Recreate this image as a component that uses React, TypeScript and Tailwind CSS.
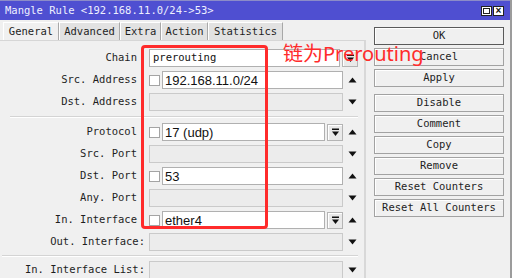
import React from 'react';

const MONO = { fontFamily: '"DejaVu Sans Mono", "Liberation Mono", monospace' };
const SANS = { fontFamily: '"Liberation Sans", Arial, sans-serif' };

type Row = {
  label: string;
  colon?: boolean;
  value?: string;
  check?: boolean;
  drop?: boolean;
  arrow: 'up' | 'down';
};

const rowsA: Row[] = [
  { label: 'Src. Address', check: true, value: '192.168.11.0/24', arrow: 'up' },
  { label: 'Dst. Address', arrow: 'down' },
];

const rowsB: Row[] = [
  { label: 'Protocol', check: true, value: '17 (udp)', drop: true, arrow: 'up' },
  { label: 'Src. Port', arrow: 'down' },
  { label: 'Dst. Port', check: true, value: '53', arrow: 'up' },
  { label: 'Any. Port', arrow: 'down' },
  { label: 'In. Interface', check: true, value: 'ether4', drop: true, arrow: 'up' },
  { label: 'Out. Interface:', colon: true, arrow: 'down' },
];

const buttons = ['Disable', 'Comment', 'Copy', 'Remove', 'Reset Counters', 'Reset All Counters'];

// small down-to-bar icon used in combo buttons
const DropIcon = () => (
  <svg width="9" height="9" viewBox="0 0 9 9">
    <rect x="1" y="0.5" width="7" height="1.5" fill="#111" />
    <path d="M1 3.5 H8 L4.5 8 Z" fill="#111" />
  </svg>
);

const Arrow = ({ dir }: { dir: 'up' | 'down' }) => (
  <svg width="9" height="6" viewBox="0 0 9 6">
    {dir === 'up' ? <path d="M0.5 5.5 L4.5 0.5 L8.5 5.5 Z" fill="#111" /> : <path d="M0.5 0.5 L8.5 0.5 L4.5 5.5 Z" fill="#111" />}
  </svg>
);

const DropButton = () => (
  <div className="w-[16px] h-[17px] ml-[2px] shrink-0 flex items-center justify-center bg-[#e9e9e9] border border-[#b4b4b4] shadow-[inset_1px_1px_0_#fff]">
    <DropIcon />
  </div>
);

const FieldRow = ({ row }: { row: Row }) => (
  <div className="flex items-center h-[22px]">
    <div
      className={`w-[146px] shrink-0 text-right text-[10.5px] text-[#1e1e1e] whitespace-nowrap ${row.colon ? 'pr-[1px]' : 'pr-[9px]'}`}
      style={MONO}
    >
      {row.label}
    </div>
    <div className="ml-[3px] w-[194px] flex items-center shrink-0">
      {row.check && (
        <div className="w-[11px] h-[11px] mr-[2px] shrink-0 bg-white border border-[#a4a4a4]" />
      )}
      {row.value !== undefined ? (
        <div
          className="flex-1 h-[18px] bg-white border border-[#b0b0b0] flex items-center pl-[2px] text-[13px] leading-none text-[#111]"
          style={SANS}
        >
          {row.value}
        </div>
      ) : (
        <div className="flex-1 h-[18px] bg-[#ececec] border border-[#cacaca]" />
      )}
      {row.drop && <DropButton />}
    </div>
    <div className="w-[18px] flex justify-center">
      <Arrow dir={row.arrow} />
    </div>
  </div>
);

const Separator = ({ h, from }: { h: string; from: string }) => (
  <div className={`${h} flex items-center ${from} pr-[6px]`}>
    <div className="w-full h-[2px] border-t border-[#d4d4d4] border-b border-b-white" />
  </div>
);

const Button = ({ label, def }: { label: string; def?: boolean }) => (
  <div
    className={`h-[18px] flex items-center justify-center text-[10.5px] text-[#1e1e1e] bg-[#f0f0f0] shadow-[inset_1px_1px_0_#fff] border ${def ? 'border-[#5a5a5a]' : 'border-[#a2a2a2]'}`}
    style={MONO}
  >
    {label}
  </div>
);

export default function App() {
  const tabs = [
    { name: 'General', w: 'w-[56px]' },
    { name: 'Advanced', w: 'w-[61px]' },
    { name: 'Extra', w: 'w-[41px]' },
    { name: 'Action', w: 'w-[47px]' },
    { name: 'Statistics', w: 'w-[75px]' },
  ];

  return (
    <div className="relative w-[512px] h-[278px] overflow-hidden bg-[#f0f0f0] border-r-2 border-[#9c9c9c]">
      {/* title bar */}
      <div className="h-[20px] bg-[#4f4fd1] border-t border-[#8c8cc8] flex items-center justify-between pl-[5px] pr-[6px]">
        <span className="text-[10.5px] text-[#eef0ff]" style={MONO}>
          {'Mangle Rule <192.168.11.0/24->53>'}
        </span>
        <div className="flex gap-[1px]">
          <div className="w-[11px] h-[10px] bg-white border border-[#222] flex items-center justify-center">
            <div className="w-[7px] h-[6px] border border-[#222]" />
          </div>
          <div className="w-[11px] h-[10px] bg-white border border-[#222] flex items-center justify-center text-[10px] font-bold leading-none text-[#111]" style={SANS}>
            ×
          </div>
        </div>
      </div>

      <div className="flex">
        {/* left: tabs + form */}
        <div className="w-[366px] shrink-0 flex flex-col">
          <div className="flex pl-[3px] mt-[2px] h-[18px]">
            {tabs.map((t, i) => (
              <div
                key={t.name}
                className={`${t.w} h-[18px] flex items-center justify-center text-[10.5px] text-[#1e1e1e] border-t border-l border-t-white border-l-white border-r border-r-[#a8a8a8] ${i === 0 ? 'bg-[#f0f0f0]' : 'bg-[#e2e2e2]'}`}
                style={MONO}
              >
                {t.name}
              </div>
            ))}
          </div>
          <div className="h-[238px] border-t border-[#d6d6d6] border-r-2 border-r-[#d8d8d8] pt-[6px]">
            {/* chain */}
            <div className="flex items-center h-[22px]">
              <div className="w-[146px] shrink-0 text-right pr-[9px] text-[10.5px] text-[#1e1e1e]" style={MONO}>
                Chain
              </div>
              <div className="ml-[3px] w-[191px] h-[18px] bg-white border border-[#b0b0b0] flex items-center pl-[3px] text-[10.5px] text-[#111]" style={MONO}>
                prerouting
              </div>
              <DropButton />
            </div>
            {rowsA.map((r) => (
              <FieldRow key={r.label} row={r} />
            ))}
            <Separator h="h-[8px]" from="pl-[10px]" />
            {rowsB.map((r) => (
              <FieldRow key={r.label} row={r} />
            ))}
            <Separator h="h-[6px]" from="pl-[2px]" />
            <FieldRow row={{ label: 'In. Interface List:', colon: true, arrow: 'down' }} />
          </div>
        </div>

        {/* right: buttons */}
        <div className="w-[130px] ml-[8px] pt-[7px] flex flex-col gap-[3px]">
          <Button label="OK" def />
          <Button label="Cancel" />
          <Button label="Apply" />
          <div className="h-[4px] -my-[3px] mt-0" />
          {buttons.map((b) => (
            <Button key={b} label={b} />
          ))}
        </div>
      </div>

      {/* annotation overlay */}
      <div className="absolute left-[141px] top-[45px] w-[127px] h-[184px] border-[3px] border-[#ff2b2b] rounded-[4px]" />
      <div
        className="absolute left-[283px] top-[41px] text-[20px] leading-[26px] text-[#ff2b2b]"
        style={{ fontFamily: '"Noto Sans", "Noto Sans CJK SC", sans-serif' }}
      >
        链为Prerouting
      </div>
    </div>
  );
}
